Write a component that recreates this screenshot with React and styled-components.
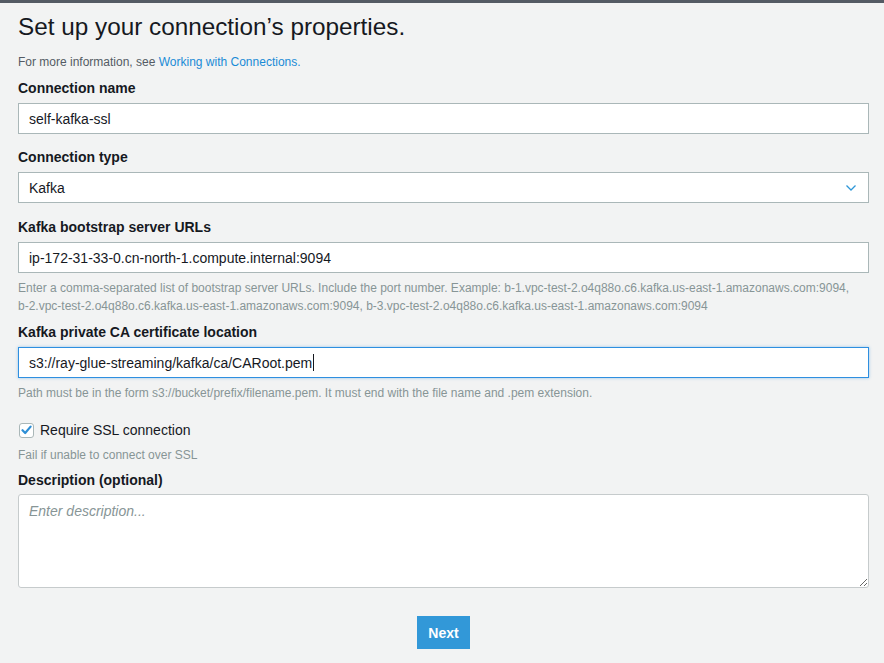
import React from "react";
import styled, { createGlobalStyle } from "styled-components";

const GlobalStyle = createGlobalStyle`
  * { box-sizing: border-box; }
  body {
    margin: 0;
    background: #f2f3f3;
    font-family: "Liberation Sans", Arial, sans-serif;
    color: #16191f;
  }
`;

export default function App() {
  return (
    <>
      <GlobalStyle />
      <TopBar />
      <Page>
        <Title>Set up your connection’s properties.</Title>
        <Info>
          For more information, see <InfoLink href="#">Working with Connections.</InfoLink>
        </Info>

        <Field $gap={8}>
          <Label>Connection name</Label>
          <TextInput readOnly value="self-kafka-ssl" />
        </Field>

        <Field>
          <Label>Connection type</Label>
          <SelectBox>
            <span>Kafka</span>
            <svg width="12" height="8" viewBox="0 0 12 8">
              <path d="M1.5 1.5 L6 6 L10.5 1.5" fill="none" stroke="#2e97d8" strokeWidth="1.3" />
            </svg>
          </SelectBox>
        </Field>

        <Field $gap={14}>
          <Label>Kafka bootstrap server URLs</Label>
          <TextInput readOnly value="ip-172-31-33-0.cn-north-1.compute.internal:9094" />
          <Help>
            Enter a comma-separated list of bootstrap server URLs. Include the port number. Example: b-1.vpc-test-2.o4q88o.c6.kafka.us-east-1.amazonaws.com:9094,
            <br />
            b-2.vpc-test-2.o4q88o.c6.kafka.us-east-1.amazonaws.com:9094, b-3.vpc-test-2.o4q88o.c6.kafka.us-east-1.amazonaws.com:9094
          </Help>
        </Field>

        <Field $gap={7}>
          <Label>Kafka private CA certificate location</Label>
          <FocusedInput>
            s3://ray-glue-streaming/kafka/ca/CARoot.pem<Caret />
          </FocusedInput>
          <Help>
            Path must be in the form s3://bucket/prefix/filename.pem. It must end with the file name and .pem extension.
          </Help>
        </Field>

        <CheckRow>
          <CheckBox>
            <svg width="11" height="10" viewBox="0 0 11 10">
              <path d="M1.5 5.2 L4.2 8 L9.6 1.6" fill="none" stroke="#2e8fd6" strokeWidth="2.2" strokeLinecap="round" strokeLinejoin="round" />
            </svg>
          </CheckBox>
          <CheckLabel>Require SSL connection</CheckLabel>
        </CheckRow>
        <Help $top={7}>Fail if unable to connect over SSL</Help>

        <Field $gap={6}>
          <Label $below={4}>Description (optional)</Label>
          <TextArea placeholder="Enter description..." />
        </Field>

        <Actions>
          <NextButton>Next</NextButton>
        </Actions>
      </Page>
    </>
  );
}

const TopBar = styled.div`
  height: 3px;
  background: #545b64;
`;

const Page = styled.div`
  padding: 10px 15px 0 18px;
`;

const Title = styled.h1`
  margin: 0;
  font-size: 24.3px;
  line-height: 28px;
  font-weight: 400;
  color: #16191f;
`;

const Info = styled.p`
  margin: 13px 0 0;
  font-size: 12px;
  line-height: 16px;
  color: #545b64;
`;

const InfoLink = styled.a`
  color: #1a8bd6;
  text-decoration: none;
`;

const Field = styled.div`
  display: flex;
  flex-direction: column;
  margin-top: ${({ $gap = 13 }) => $gap}px;
`;

const Label = styled.label`
  font-size: 14px;
  line-height: 20px;
  font-weight: 700;
  color: #16191f;
  margin-bottom: ${({ $below = 5 }) => $below}px;
`;

const inputBase = `
  height: 31px;
  width: 100%;
  background: #fff;
  border: 1px solid #aab7b8;
  border-radius: 0;
  padding: 0 10px;
  font-family: "Liberation Sans", Arial, sans-serif;
  font-size: 14px;
  color: #16191f;
  outline: none;
`;

const TextInput = styled.input`
  ${inputBase}
`;

const SelectBox = styled.div`
  ${inputBase}
  display: flex;
  align-items: center;
  justify-content: space-between;
  padding-right: 11px;
`;

const FocusedInput = styled.div`
  ${inputBase}
  display: flex;
  align-items: center;
  border-color: #2e8fe0;
  box-shadow: 0 0 3px rgba(46, 143, 224, 0.45);
`;

const Caret = styled.span`
  display: inline-block;
  width: 1px;
  height: 17px;
  background: #16191f;
  margin-left: 1px;
`;

const Help = styled.p`
  margin: ${({ $top = 6 }) => $top}px 0 0;
  font-size: 12px;
  line-height: 18px;
  color: #879596;
  white-space: nowrap;
`;

const CheckRow = styled.div`
  display: flex;
  align-items: center;
  gap: 6px;
  margin-top: 19px;
  height: 18px;
`;

const CheckBox = styled.span`
  width: 15px;
  height: 15px;
  margin-left: 1px;
  border: 1px solid #aab7b8;
  border-radius: 3px;
  background: #fff;
  display: flex;
  align-items: center;
  justify-content: center;
`;

const CheckLabel = styled.span`
  font-size: 14px;
  color: #16191f;
`;

const TextArea = styled.textarea`
  height: 94px;
  width: 100%;
  resize: vertical;
  background: #fff;
  border: 1px solid #c6cbcc;
  border-radius: 3px;
  padding: 8px 10px;
  font-family: "Liberation Sans", Arial, sans-serif;
  font-size: 14px;
  outline: none;
  display: block;

  &::placeholder {
    color: #879596;
    font-style: italic;
  }
`;

const Actions = styled.div`
  display: flex;
  justify-content: center;
  margin-top: 28px;
`;

const NextButton = styled.button`
  width: 53px;
  height: 33px;
  background: #3298d8;
  color: #fff;
  border: none;
  border-radius: 0;
  font-family: "Liberation Sans", Arial, sans-serif;
  font-size: 14px;
  font-weight: 700;
  cursor: pointer;
`;
